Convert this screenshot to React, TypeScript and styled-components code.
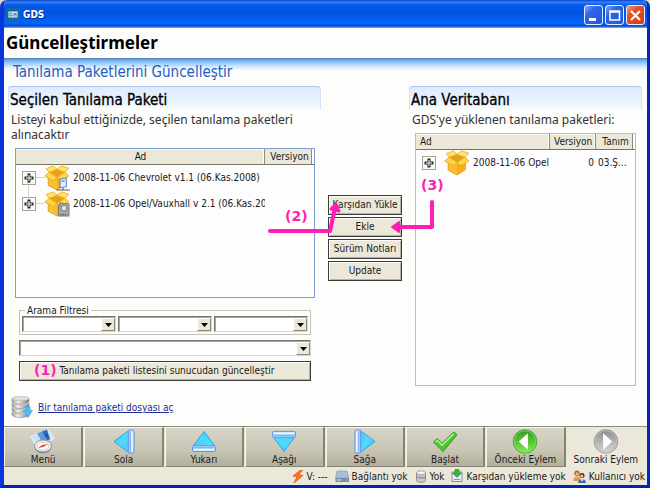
import React from "react";
import styled, { createGlobalStyle, css } from "styled-components";

const ui = `"DejaVu Sans Condensed", "DejaVu Sans", sans-serif`;
const wide = `"DejaVu Sans", sans-serif`;
const magenta = "#ff1fb4";

const GlobalStyle = createGlobalStyle`
  *, *::before, *::after { box-sizing: border-box; }
  body { margin: 0; background: #d8dcc8; font-family: ${ui}; font-size: 10px; color: #1a1a1a; }
  button, select { font: inherit; color: inherit; margin: 0; }
`;

const Window = styled.div`
  display: flex;
  flex-direction: column;
  min-height: 100vh;
  background: #fdfdfb;
  border: solid #0a3fe0;
  border-width: 0 3px 3px 4px;
  border-color: #0a3fe0 #0428b8 #0424b0 #0a35dc;
  border-radius: 7px 7px 0 0;
  overflow: hidden;
`;

const TitleBar = styled.header`
  display: flex;
  align-items: center;
  height: 28px;
  margin: 0 -3px 0 -4px;
  padding: 2px 5px 0 6px;
  flex: none;
  background: linear-gradient(#0a3fc8 0, #2f83f8 2px, #0458e8 5px, #0052e2 13px, #0364fb 22px, #0262f8 24px, #0247cf 26px, #8fb4f0 28px);
`;

const WindowName = styled.span`
  flex: 1;
  margin-left: 3px;
  font-weight: bold;
  font-size: 10px;
  line-height: 14px;
  color: #fff;
  text-shadow: 1px 1px 0 #0a2f8c;
`;

const WindowControls = styled.div`
  display: flex;
  gap: 2px;
`;

const ControlButton = styled.button<{ $danger?: boolean }>`
  width: 19px;
  height: 20px;
  padding: 0;
  display: grid;
  place-items: center;
  border: 1px solid #e8f0ff;
  border-radius: 3px;
  background: ${(p) =>
    p.$danger
      ? "linear-gradient(135deg, #f0a080, #e2502a 35%, #d63c10)"
      : "linear-gradient(135deg, #7ea6f6, #2f62e4 35%, #2258e0)"};
`;

const PageHeader = styled.div`
  flex: none;
  height: 30px;
  padding: 0 2px;
`;

const PageTitle = styled.h1`
  margin: 0;
  font-family: "Noto Sans", sans-serif;
  font-size: 17px;
  line-height: 30px;
  font-weight: bold;
  color: #000;
`;

const SectionTitle = styled.h2`
  flex: none;
  margin: 0;
  height: 28px;
  padding: 4px 9px 0;
  border-top: 1px solid #5a84b8;
  background: linear-gradient(#4b9bf8 0, #9dcafc 4px, #e4f1fd 9px, #fdfdfb 12px);
  font-weight: normal;
  font-size: 15px;
  line-height: 18px;
  color: #2060c0;
`;

const Content = styled.main`
  flex: 1;
  display: grid;
  grid-template-columns: minmax(0, 313fr) 74px minmax(0, 233fr);
  column-gap: 7px;
  padding: 0 5px 7px 4px;
`;

const Column = styled.section`
  display: flex;
  flex-direction: column;
  min-width: 0;
`;

const PanelTitle = styled.h3`
  flex: none;
  margin: 0;
  height: 24px;
  padding: 3px 2px 0;
  border-top: 1px solid #a9c6f2;
  border-radius: 4px 4px 0 0;
  background: linear-gradient(#dfebfd, #e9f2fe 60%, #fdfdfb);
  box-shadow: inset 1px 0 0 #d4e3fa, inset -1px 0 0 #d4e3fa;
  font-size: 15px;
  line-height: 20px;
  font-weight: normal;
  color: #000;
  -webkit-text-stroke: 0.3px #000;
`;

const Description = styled.p`
  margin: 0;
  padding: 2px 3px 0;
  font-family: "Noto Sans", sans-serif;
  font-size: 12px;
  line-height: 15px;
  color: #333;
`;

const List = styled.div<{ $fill?: boolean }>`
  margin: ${(p) => (p.$fill ? "6px 6px 33px" : "6px 6px 0 7px")};
  border: 1px solid ${(p) => (p.$fill ? "#a8c0e4" : "#7f9fd0")};
  background: #fdfdfd;
  ${(p) => (p.$fill ? css`flex: 1;` : css`height: 150px;`)}
`;

const Table = styled.table`
  width: 100%;
  table-layout: fixed;
  border-collapse: collapse;
`;

const HeadCell = styled.th<{ $w?: number; $left?: boolean }>`
  height: 15px;
  padding: 0 4px;
  ${(p) => p.$w && css`width: ${p.$w}px;`}
  text-align: ${(p) => (p.$left ? "left" : "center")};
  font-weight: normal;
  line-height: 13px;
  overflow: hidden;
  background: #ebe8d9;
  border-bottom: 1px solid #77756a;
  box-shadow: inset -1px 0 0 #8c8a7c, inset -2px 0 0 #fff, inset 0 1px 0 #f8f7f0;
  &:last-child { box-shadow: inset -2px 0 0 #fff, inset -3px 0 0 #8c8a7c; }
`;

const Cell = styled.td<{ $right?: boolean }>`
  height: 26px;
  padding: 0 2px;
  overflow: hidden;
  white-space: nowrap;
  text-align: ${(p) => (p.$right ? "right" : "left")};
  &:first-child { padding: 0 0 0 6px; }
`;

const TreeItem = styled.div`
  display: flex;
  align-items: center;
`;

const Expander = styled.button<{ $join?: "down" | "up" }>`
  position: relative;
  flex: none;
  width: 14px;
  height: 14px;
  padding: 0;
  display: grid;
  place-items: center;
  border: 1px solid #a4a494;
  background: #fafaf6;
  ${(p) =>
    p.$join &&
    css`
      &::before {
        content: "";
        position: absolute;
        left: 5px;
        ${p.$join === "down" ? "top" : "bottom"}: 13px;
        height: 7px;
        border-left: 1px solid #d4d4cc;
      }
    `}
`;

const Branch = styled.span<{ $hidden?: boolean }>`
  flex: none;
  width: 8px;
  height: 1px;
  background: ${(p) => (p.$hidden ? "transparent" : "#d4d4cc")};
`;

const PackageIcon = styled.svg`
  flex: none;
`;

const ItemName = styled.span`
  margin-left: 3px;
`;

const Actions = styled.div`
  position: relative;
  display: flex;
  flex-direction: column;
  gap: 2px;
  align-self: start;
  margin-top: 109px;
`;

const PushButton = styled.button`
  height: 20px;
  padding: 0;
  border: 1px solid #3c3c3c;
  background: #ebe8da;
  box-shadow: inset 1px 1px 0 #fbfaf4, inset -1px -1px 0 #b4b1a0;
  line-height: 16px;
  white-space: nowrap;
  position: relative;
`;

const Callout = styled.span<{ $x: number; $y: number }>`
  position: absolute;
  left: ${(p) => p.$x}px;
  top: ${(p) => p.$y}px;
  font-family: ${wide};
  font-weight: bold;
  font-size: 14px;
  line-height: 16px;
  color: ${magenta};
  pointer-events: none;
`;

const Arrows = styled.svg`
  position: absolute;
  left: -68px;
  top: 0;
  pointer-events: none;
  overflow: visible;
`;

const Filters = styled.form`
  display: flex;
  flex-direction: column;
  margin: 7px 10px 0 11px;
`;

const FilterGroup = styled.fieldset`
  display: grid;
  grid-template-columns: repeat(3, minmax(0, 1fr));
  gap: 2px;
  min-width: 0;
  margin: 0;
  padding: 0 2px 2px;
  border: 1px solid #c4c3b8;
`;

const Legend = styled.legend`
  margin-left: 3px;
  padding: 0 2px;
  line-height: 11px;
  height: 11px;
`;

const SelectBox = styled.span`
  position: relative;
  display: block;
  height: 16px;
  border: 1px solid #d8d6ca;
  border-top-color: #77756a;
  border-left-color: #77756a;
  box-shadow: inset 1px 1px 0 #a8a698;
  background: #fff;
`;

const Select = styled.select`
  display: block;
  appearance: none;
  width: 100%;
  height: 100%;
  padding: 0 16px 0 4px;
  border: 0;
  background: transparent;
`;

const DropArrow = styled.span`
  position: absolute;
  top: 1px;
  right: 0;
  bottom: 0;
  width: 14px;
  display: grid;
  place-items: center;
  background: #ebe8da;
  border: 1px solid #fff;
  border-right-color: #8c8a7c;
  border-bottom-color: #8c8a7c;
  pointer-events: none;
`;

const ComboRow = styled.div`
  margin-top: 5px;
`;

const RefreshButton = styled(PushButton)`
  margin: 5px 0 0;
  padding-left: 4px;
`;

const OpenFile = styled.div`
  display: flex;
  align-items: center;
  gap: 5px;
  margin: 15px 0 0 3px;
`;

const FileLink = styled.a`
  color: #1c2c98;
  text-decoration: underline;
`;

const Toolbar = styled.nav`
  flex: none;
  display: grid;
  grid-template-columns: repeat(8, minmax(0, 1fr));
  height: 41px;
  border-top: 1px solid #8c8a7c;
  background: #ebe8da;
`;

const ToolButton = styled.button<{ $flat?: boolean }>`
  display: flex;
  flex-direction: column;
  align-items: center;
  justify-content: flex-start;
  padding: 1px 0 0;
  margin-right: 1px;
  border: 1px solid #f6f5ee;
  border-right: 2px solid #85836f;
  border-bottom-color: #85836f;
  background: linear-gradient(#d8d5c7, #c8c5b5 60%, #b2ae9c);
  line-height: 12px;
  white-space: nowrap;
  svg { flex: none; }
  ${(p) => p.$flat && css`background: #ebe8da; border-color: transparent;`}
`;

const StatusBar = styled.footer`
  flex: none;
  display: flex;
  justify-content: flex-end;
  align-items: center;
  gap: 7px;
  height: 18px;
  padding-right: 2px;
  background: #ebe8da;
`;

const StatusItem = styled.span`
  display: flex;
  align-items: center;
  gap: 3px;
  white-space: nowrap;
`;

const Logo = () => (
  <svg width="14" height="14" viewBox="0 0 14 14">
    <rect width="14" height="14" fill="#1767a8" />
    <path d="M2.500 3.500h9v6h-9z" fill="#e2eefa" />
    <path d="M6.300 5H4v3h2V6.500M8 8.500V5l1 1.500 1-1.500v3.500" stroke="#1767a8" strokeWidth=".8" fill="none" />
  </svg>
);

const Plus = () => (
  <svg width="10" height="10" viewBox="0 0 10 10">
    <path d="M3.500.5h3v3h3v3h-3v3h-3v-3h-3v-3h3z" fill="#2a2a2a" />
    <path d="M5 2v6M2 5h6" stroke="#fff" />
  </svg>
);

const Package = ({ badge }: { badge?: "pc" | "disk" }) => (
  <PackageIcon width="26" height="26" viewBox="0 0 25 25">
    <path d="M4 10l8 3.500 8.500-3.500v9L12.500 24 4 19.500z" fill="#fdbf32" stroke="#e09a18" strokeWidth=".8" />
    <path d="M12.500 13.500V24l8-5v-9z" fill="#f7ac1c" />
    <path d="M5 7l7.500-3L20 7l-7.500 5z" fill="#e8a01c" />
    <path d="M5 7L2 3.500 9 .8l3.500 3.200zM20 7l4-3.800L17 .8 12.500 4z" fill="#ffe267" stroke="#efae20" strokeWidth=".8" />
    <path d="M5 7L.7 10.700 9 15l3.500-3zM20 7l4 3.500L16 15l-3.500-3z" fill="#ffd848" stroke="#eaa41c" strokeWidth=".8" />
    {badge === "pc" && (
      <g>
        <path d="M15.500 13.500l6-1v8.500l-6 .8z" fill="#e4eefb" stroke="#5d82bd" />
        <path d="M17 15.500l3-.4" stroke="#4d76ba" />
        <path d="M18.500 22v1.500M12 24h13" stroke="#555c66" />
      </g>
    )}
    {badge === "disk" && (
      <g>
        <path d="M15.500 11.500l8.500 1v11.500h-10v-9z" fill="#a8aaa8" stroke="#777b79" />
        <circle cx="19.200" cy="16.500" r="2.800" fill="#dde0df" stroke="#848886" />
        <path d="M16 22.500h6" stroke="#444" strokeDasharray="1 1" />
      </g>
    )}
  </PackageIcon>
);

const Triangle = () => (
  <svg width="7" height="4" viewBox="0 0 7 4">
    <path d="M0 0h7L3.500 4z" fill="#000" />
  </svg>
);

const Database = () => (
  <svg width="22" height="23" viewBox="0 0 22 23">
    <defs>
      <linearGradient id="metal">
        <stop offset="0" stopColor="#999" />
        <stop offset=".35" stopColor="#f4f4f4" />
        <stop offset="1" stopColor="#777" />
      </linearGradient>
    </defs>
    {[14, 9.5, 5, 0.5].map((y) => (
      <g key={y}>
        <path d={`M1 ${y + 2}v2.500c0 4 17 4 17 0v-2.500z`} fill="url(#metal)" stroke="#888" strokeWidth=".6" />
        <ellipse cx="9.500" cy={y + 2} rx="8.500" ry="2.300" fill="#dcdcdc" stroke="#aaa" strokeWidth=".5" />
      </g>
    ))}
    <path d="M15 10.500h4v4h2.500L17 21.500 12.500 14.500H15z" fill="#52bdf5" stroke="#4a9fdc" strokeWidth=".7" />
  </svg>
);

const MenuIcon = () => (
  <svg width="26" height="25" viewBox="0 0 26 25">
    <path d="M1 7.500l6-3 5 7-7 4z" fill="#cfe2f8" stroke="#fff" strokeWidth=".6" />
    <path d="M7 4.500l5-2 5 8-6 1z" fill="#5b9ce6" />
    <path d="M12 2.500l5-2 5 9-5 2z" fill="#2a6cc4" />
    <path d="M17 .5l3 1 5 8-4 3z" fill="#d6e8fb" />
    <path d="M14 6l3-1 1 3z" fill="#184a94" />
    <ellipse cx="13" cy="18" rx="8.500" ry="6.300" fill="#8a8a8a" />
    <ellipse cx="13" cy="17" rx="8.500" ry="6" fill="#eee" stroke="#888" strokeWidth=".8" />
    <ellipse cx="13" cy="17" rx="6" ry="4" fill="#fff" stroke="#bbb" strokeWidth=".7" />
    <path d="M8 19l4-3 6-1-4.500 3z" fill="#e2502c" />
  </svg>
);

const DirectionIcon = ({ turn }: { turn: number }) => (
  <svg width="26" height="25" viewBox="0 0 26 26">
    <defs>
      <linearGradient id="sky" x1="0" x2="1" y1="0" y2="1">
        <stop offset="0" stopColor="#2fb0f4" />
        <stop offset=".5" stopColor="#4fdcff" />
        <stop offset="1" stopColor="#48c8f8" />
      </linearGradient>
    </defs>
    <g transform={`rotate(${turn} 13 13)`}>
      <path d="M2.500 13L18 1.500v23z" fill="url(#sky)" stroke="#3c9fe8" strokeLinejoin="round" />
      <rect x="17.500" y="1" width="6" height="24" rx="1.500" fill="#bcdcfb" stroke="#5b92e4" />
      <path d="M19.500 2.500v21" stroke="#6ea4ea" />
      <path d="M21.500 2.500v21" stroke="#f2f8ff" strokeWidth="1.500" />
    </g>
  </svg>
);

const CheckIcon = () => (
  <svg width="26" height="25" viewBox="0 0 26 26">
    <path d="M1 13.500l4-3.500 5 5L22 3l3.500 3L11 23.500z" fill="#48c82a" stroke="#2f9a1c" strokeLinejoin="round" />
    <path d="M3 13.500l2-1.500 5 5L22 5" stroke="#b4f494" strokeWidth="1.500" fill="none" />
  </svg>
);

const RoundIcon = ({ next }: { next?: boolean }) => (
  <svg width="26" height="25" viewBox="0 0 26 26">
    <defs>
      <linearGradient id={next ? "grey" : "green"} x1="0" x2="0" y1="0" y2="1">
        <stop offset="0" stopColor={next ? "#8c8c8c" : "#2f9a1c"} />
        <stop offset="1" stopColor={next ? "#d8d8d8" : "#84ee50"} />
      </linearGradient>
    </defs>
    <circle cx="13" cy="13" r="12.300" fill={`url(#${next ? "grey" : "green"})`} stroke={next ? "#999" : "#4aa838"} />
    <circle cx="13" cy="13" r="11.200" fill="none" stroke={next ? "#c4c4c4" : "#8ade70"} strokeWidth=".8" />
    <path d={next ? "M10 4.500l9.500 8.500L10 21.500z" : "M16 4.500L6.500 13l9.500 8.500z"} fill="#fff" />
  </svg>
);

const Bolt = () => (
  <svg width="12" height="13" viewBox="0 0 12 13">
    <path d="M8.500 0L1 6l4 .8L2 13l9-7.500-4.200-.8L10.500 0z" fill="#ff7a1c" stroke="#d84a10" strokeWidth=".7" />
  </svg>
);

const Drive = () => (
  <svg width="14" height="13" viewBox="0 0 14 13">
    <path d="M2 1h10l2 7H.500z" fill="#a9c0dc" stroke="#8094ae" strokeWidth=".6" />
    <path d="M.500 8h13.500v4H.500z" fill="#7d8ea6" />
    <path d="M2 10h4" stroke="#dce6f2" />
    <path d="M11 10h1.500" stroke="#62e052" />
  </svg>
);

const SmallDb = () => (
  <svg width="12" height="13" viewBox="0 0 12 13">
    <path d="M1.500 2.500v8c0 2.500 9 2.500 9 0v-8z" fill="#c6c7cf" stroke="#777" strokeWidth=".7" />
    <ellipse cx="6" cy="2.800" rx="4.500" ry="2" fill="#f5f5f8" stroke="#888" strokeWidth=".7" />
    <path d="M1.500 6.500c1 2 8 2 9 0" fill="none" stroke="#777" />
  </svg>
);

const DownloadState = () => (
  <svg width="12" height="14" viewBox="0 0 12 14">
    <path d="M1 3h10v9.500H1z" fill="#e8eef6" stroke="#7d8fa8" />
    <path d="M3 10.500h6" stroke="#8092ac" />
    <path d="M4 .5h4V4h2.500L6 8.500 1.500 4H4z" fill="#39b82c" stroke="#248a1c" strokeWidth=".6" />
  </svg>
);

const Users = () => (
  <svg width="13" height="13" viewBox="0 0 13 13">
    <circle cx="4" cy="3.200" r="2.700" fill="#b0662a" />
    <circle cx="4" cy="3.700" r="1.500" fill="#f4c490" />
    <path d="M0 11c0-6 8-6 8 0z" fill="#f0963c" />
    <circle cx="9" cy="5.500" r="2.500" fill="#4a2c18" />
    <circle cx="8.800" cy="6" r="1.500" fill="#f8d0a4" />
    <path d="M5 13c0-5.500 8-5.500 8 0z" fill="#3e68b0" />
    <path d="M8 9l1 2 1-2" stroke="#fff" fill="none" />
  </svg>
);

const DropDown = ({ label }: { label: string }) => (
  <SelectBox>
    <Select aria-label={label} defaultValue="">
      <option value="" />
    </Select>
    <DropArrow>
      <Triangle />
    </DropArrow>
  </SelectBox>
);

type TreeLabelProps = { name: string; badge?: "pc" | "disk"; root?: boolean; join?: "down" | "up" };

const TreeLabel = ({ name, badge, root, join }: TreeLabelProps) => (
  <TreeItem>
    <Expander type="button" aria-label={name} $join={join}>
      <Plus />
    </Expander>
    <Branch $hidden={root} />
    <Package badge={badge} />
    <ItemName>{name}</ItemName>
  </TreeItem>
);

const tools = [
  { label: "Menü", icon: <MenuIcon /> },
  { label: "Sola", icon: <DirectionIcon turn={0} /> },
  { label: "Yukarı", icon: <DirectionIcon turn={90} /> },
  { label: "Aşağı", icon: <DirectionIcon turn={270} /> },
  { label: "Sağa", icon: <DirectionIcon turn={180} /> },
  { label: "Başlat", icon: <CheckIcon /> },
  { label: "Önceki Eylem", icon: <RoundIcon /> },
  { label: "Sonraki Eylem", icon: <RoundIcon next />, flat: true },
];

const statuses = [
  { label: "V: ---", icon: <Bolt /> },
  { label: "Bağlantı yok", icon: <Drive /> },
  { label: "Yok", icon: <SmallDb /> },
  { label: "Karşıdan yükleme yok", icon: <DownloadState /> },
  { label: "Kullanıcı yok", icon: <Users /> },
];

export default function App() {
  return (
    <>
      <GlobalStyle />
      <Window>
        <TitleBar>
          <Logo />
          <WindowName>GDS</WindowName>
          <WindowControls>
            <ControlButton type="button" aria-label="Simge durumuna küçült">
              <svg width="15" height="15" viewBox="0 0 15 15"><path d="M3 11.500h7" stroke="#fff" strokeWidth="3" /></svg>
            </ControlButton>
            <ControlButton type="button" aria-label="Ekranı kapla">
              <svg width="15" height="15" viewBox="0 0 15 15"><path d="M3 12V3h9.500v9zM3 4h9.500" stroke="#fff" strokeWidth="1.500" fill="none" /></svg>
            </ControlButton>
            <ControlButton type="button" aria-label="Kapat" $danger>
              <svg width="15" height="15" viewBox="0 0 15 15"><path d="M3 3l9 9M12 3l-9 9" stroke="#fff" strokeWidth="2.200" /></svg>
            </ControlButton>
          </WindowControls>
        </TitleBar>
        <PageHeader>
          <PageTitle>Güncelleştirmeler</PageTitle>
        </PageHeader>
        <SectionTitle>Tanılama Paketlerini Güncelleştir</SectionTitle>
        <Content>
          <Column>
            <PanelTitle>Seçilen Tanılama Paketi</PanelTitle>
            <Description>Listeyi kabul ettiğinizde, seçilen tanılama paketleri alınacaktır</Description>
            <List>
              <Table>
                <thead>
                  <tr>
                    <HeadCell>Ad</HeadCell>
                    <HeadCell $w={49}>Versiyon</HeadCell>
                  </tr>
                </thead>
                <tbody>
                  <tr>
                    <Cell><TreeLabel name="2008-11-06 Chevrolet v1.1 (06.Kas.2008)" badge="pc" join="down" /></Cell>
                    <Cell />
                  </tr>
                  <tr>
                    <Cell><TreeLabel name="2008-11-06 Opel/Vauxhall v 2.1 (06.Kas.2008)" badge="disk" join="up" /></Cell>
                    <Cell />
                  </tr>
                </tbody>
              </Table>
            </List>
            <Filters>
              <FilterGroup>
                <Legend>Arama Filtresi</Legend>
                <DropDown label="Filtre 1" />
                <DropDown label="Filtre 2" />
                <DropDown label="Filtre 3" />
              </FilterGroup>
              <ComboRow>
                <DropDown label="Tanılama paketi" />
              </ComboRow>
              <RefreshButton type="button">
                Tanılama paketi listesini sunucudan güncelleştir
                <Callout $x={14} $y={0}>(1)</Callout>
              </RefreshButton>
            </Filters>
            <OpenFile>
              <Database />
              <FileLink href="#">Bir tanılama paketi dosyası aç</FileLink>
            </OpenFile>
          </Column>
          <Actions>
            <PushButton type="button">Karşıdan Yükle</PushButton>
            <PushButton type="button">Ekle</PushButton>
            <PushButton type="button">Sürüm Notları</PushButton>
            <PushButton type="button">Update</PushButton>
            <Arrows width="190" height="44" viewBox="0 0 190 44" fill="none" stroke={magenta} strokeWidth="4" strokeLinecap="round" strokeLinejoin="round">
              <path d="M10 36h60l5-23" />
              <path d="M172 7v25h-36" />
              <path d="M76 9l3 7-8-2z" strokeWidth="3" fill={magenta} />
              <path d="M132 32l7-5v10z" strokeWidth="2" fill={magenta} />
            </Arrows>
            <Callout $x={-43} $y={13}>(2)</Callout>
            <Callout $x={93} $y={-18}>(3)</Callout>
          </Actions>
          <Column>
            <PanelTitle>Ana Veritabanı</PanelTitle>
            <Description>GDS'ye yüklenen tanılama paketleri:</Description>
            <List $fill>
              <Table>
                <thead>
                  <tr>
                    <HeadCell $left>Ad</HeadCell>
                    <HeadCell $w={46}>Versiyon</HeadCell>
                    <HeadCell $w={39}>Tanım</HeadCell>
                  </tr>
                </thead>
                <tbody>
                  <tr>
                    <Cell><TreeLabel name="2008-11-06 Opel" root /></Cell>
                    <Cell $right>0</Cell>
                    <Cell>03.Ş...</Cell>
                  </tr>
                </tbody>
              </Table>
            </List>
          </Column>
        </Content>
        <Toolbar>
          {tools.map((t) => (
            <ToolButton key={t.label} type="button" $flat={t.flat}>
              {t.icon}
              {t.label}
            </ToolButton>
          ))}
        </Toolbar>
        <StatusBar>
          {statuses.map((s) => (
            <StatusItem key={s.label}>
              {s.icon}
              {s.label}
            </StatusItem>
          ))}
        </StatusBar>
      </Window>
    </>
  );
}
